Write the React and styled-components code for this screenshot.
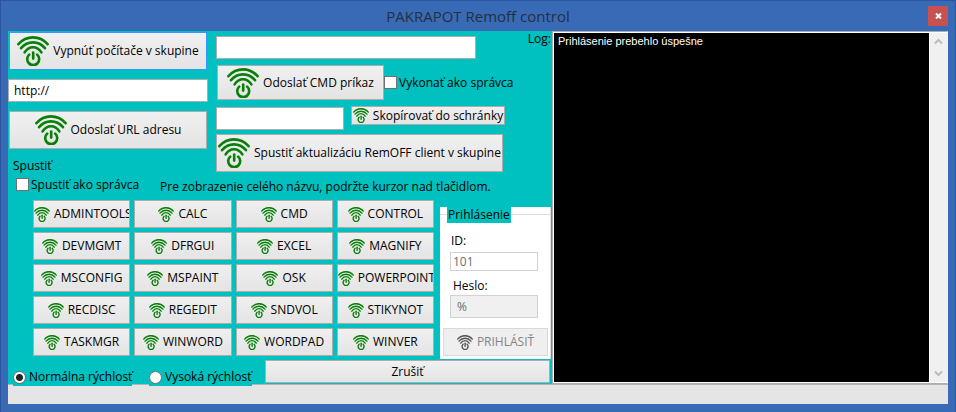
import React, { useState } from "react";
import styled, { createGlobalStyle } from "styled-components";

const programs = [
  "ADMINTOOLS", "CALC", "CMD", "CONTROL",
  "DEVMGMT", "DFRGUI", "EXCEL", "MAGNIFY",
  "MSCONFIG", "MSPAINT", "OSK", "POWERPOINT",
  "RECDISC", "REGEDIT", "SNDVOL", "STIKYNOT",
  "TASKMGR", "WINWORD", "WORDPAD", "WINVER",
];

function RemoteIcon({ small }) {
  return (
    <IconSvg $small={small} viewBox="0 0 32 30" aria-hidden="true">
      <path d="M1.4 8.2C9.5 -0.9 22.5 -0.9 30.6 8.2" />
      <path d="M4 12.2C10.7 4.4 21.3 4.4 28 12.2" />
      <path d="M7.6 16.4C12 9.6 20 9.6 24.4 16.4" />
      <path d="M12.2 18.6A6 6 0 1 0 20.2 18.6" />
      <path d="M16.2 16.6V22.6" />
    </IconSvg>
  );
}

function App() {
  const [speed, setSpeed] = useState("normal");

  return (
    <Window>
      <GlobalStyle />
      <TitleBar>
        <Title>PAKRAPOT Remoff control</Title>
        <CloseButton aria-label="Zavrieť">
          <svg width="7" height="6" viewBox="0 0 7 6">
            <path d="M1 0.5L6 5.5M6 0.5L1 5.5" stroke="#fff" strokeWidth="2" />
          </svg>
        </CloseButton>
      </TitleBar>

      <Client>
        <Controls>
          <TopArea>
            <UrlColumn>
              <BigButton $focused><RemoteIcon />Vypnúť počítače v skupine</BigButton>
              <TextBox aria-label="URL adresa" defaultValue="http://" />
              <BigButton><RemoteIcon />Odoslať URL adresu</BigButton>
              <Caption>Spustiť</Caption>
            </UrlColumn>
            <CommandColumn>
              <CommandBox aria-label="CMD príkaz" />
              <Row>
                <CommandButton><RemoteIcon />Odoslať CMD príkaz</CommandButton>
                <CheckLabel><CheckBox type="checkbox" />Vykonať ako správca</CheckLabel>
              </Row>
              <CopyRow>
                <CopyBox aria-label="Schránka" />
                <CopyButton><RemoteIcon small />Skopírovať do schránky</CopyButton>
              </CopyRow>
              <UpdateButton><RemoteIcon />Spustiť aktualizáciu RemOFF client v skupine</UpdateButton>
            </CommandColumn>
            <LogLabel htmlFor="log">Log:</LogLabel>
          </TopArea>

          <HintRow>
            <CheckLabel><CheckBox type="checkbox" />Spustiť ako správca</CheckLabel>
            <Hint>Pre zobrazenie celého názvu, podržte kurzor nad tlačidlom.</Hint>
          </HintRow>

          <MiddleArea>
            <ProgramGrid>
              {programs.map((name) => (
                <Button key={name} title={name}><RemoteIcon small />{name}</Button>
              ))}
            </ProgramGrid>
            <LoginPanel>
              <LoginHeader>
                <LoginTitle>Prihlásenie</LoginTitle>
              </LoginHeader>
              <LoginBody>
                <FieldLabel htmlFor="login-id">ID:</FieldLabel>
                <LoginBox id="login-id" defaultValue="101" disabled />
                <FieldLabel htmlFor="login-pass">Heslo:</FieldLabel>
                <PasswordBox id="login-pass" defaultValue="%" disabled />
              </LoginBody>
              <LoginButton disabled><RemoteIcon small />PRIHLÁSIŤ</LoginButton>
            </LoginPanel>
          </MiddleArea>

          <BottomRow>
            <RadioLabel $wide>
              <Radio type="radio" name="speed" checked={speed === "normal"} onChange={() => setSpeed("normal")} />
              Normálna rýchlosť
            </RadioLabel>
            <RadioLabel>
              <Radio type="radio" name="speed" checked={speed === "high"} onChange={() => setSpeed("high")} />
              Vysoká rýchlosť
            </RadioLabel>
            <CancelButton>Zrušiť</CancelButton>
          </BottomRow>
        </Controls>

        <LogFrame>
          <LogText id="log" readOnly defaultValue="Prihlásenie prebehlo úspešne" />
          <ScrollBar>
            <ScrollButton aria-label="Hore">
              <svg width="9" height="7" viewBox="0 0 9 7">
                <path d="M1 5.5L4.5 2L8 5.5" />
              </svg>
            </ScrollButton>
            <ScrollButton aria-label="Dole">
              <svg width="9" height="7" viewBox="0 0 9 7">
                <path d="M1 1.5L4.5 5L8 1.5" />
              </svg>
            </ScrollButton>
          </ScrollBar>
        </LogFrame>
      </Client>
      <StatusBar />
    </Window>
  );
}

export default App;

const GlobalStyle = createGlobalStyle`
  * {
    box-sizing: border-box;
  }

  body {
    margin: 0;
  }

  body, button, input, textarea {
    font-family: "Open Sans", "Noto Sans", sans-serif;
    font-size: 12px;
    line-height: 16px;
    color: #000;
  }
`;

const Window = styled.div`
  display: flex;
  flex-direction: column;
  min-height: 100vh;
  padding: 0 7px 8px;
  background: #386ab6;
  border: 1px solid #2c55a0;
  border-bottom: 0;
`;

const TitleBar = styled.header`
  display: flex;
  align-items: center;
  height: 30px;
`;

const Title = styled.h1`
  flex: 1;
  margin: 0;
  padding-left: 20px;
  text-align: center;
  font-size: 15px;
  line-height: 20px;
  font-weight: normal;
  color: #24303f;
`;

const CloseButton = styled.button`
  display: flex;
  align-items: center;
  justify-content: center;
  width: 20px;
  height: 20px;
  padding: 0;
  border: 0;
  background: #c75050;
`;

const Client = styled.main`
  display: flex;
  flex: 1;
  background: #00c0c0;
`;

const Controls = styled.div`
  display: flex;
  flex-direction: column;
  flex: 0 0 544px;
`;

const TopArea = styled.div`
  display: flex;
  height: 144px;
`;

const UrlColumn = styled.div`
  display: flex;
  flex-direction: column;
  gap: 9px;
  width: 200px;
  padding-top: 1px;
`;

const CommandColumn = styled.div`
  display: flex;
  flex-direction: column;
  align-items: flex-start;
  width: 300px;
  padding: 5px 0 0 8px;
`;

const Row = styled.div`
  display: flex;
  align-items: center;
  padding: 6px 0;
`;

const CopyRow = styled.div`
  display: flex;
  align-items: flex-start;
  gap: 7px;
  padding-bottom: 4px;
`;

const IconSvg = styled.svg`
  flex: none;
  width: ${(p) => (p.$small ? "16px" : "32px")};
  height: ${(p) => (p.$small ? "15px" : "30px")};
  fill: none;
  stroke: #078007;
  stroke-width: ${(p) => (p.$small ? 2.8 : 2.6)};
  stroke-linecap: round;

  button:disabled & {
    stroke: #555;
  }
`;

const Button = styled.button`
  display: flex;
  align-items: center;
  justify-content: safe center;
  gap: 4px;
  height: 28px;
  padding: 0;
  overflow: hidden;
  white-space: nowrap;
  border: 1px solid #acacac;
  background: linear-gradient(#f0f0f0, #e4e4e4);

  &:disabled {
    color: #838383;
    border-color: #d9d9d9;
    background: #efefef;
  }
`;

const BigButton = styled(Button)`
  height: 38px;
  margin: 0 1px;
  border-color: ${(p) => (p.$focused ? "#3399ff" : "#acacac")};
`;

const CommandButton = styled(Button)`
  width: 167px;
  height: 35px;
  margin-left: 1px;
`;

const CopyButton = styled(Button)`
  width: 154px;
  height: 19px;
`;

const UpdateButton = styled(Button)`
  height: 38px;
  padding: 0 1px;
`;

const CancelButton = styled(Button)`
  flex: 1;
  height: 23px;
  margin: 0 2px 0 13px;
`;

const TextBox = styled.input`
  height: 23px;
  padding: 0 5px;
  border: 1px solid #abadb3;
  border-radius: 0;
  background: #fff;
`;

const CommandBox = styled(TextBox)`
  width: 260px;
`;

const CopyBox = styled(TextBox)`
  width: 128px;
  margin-top: 1px;
`;

const Caption = styled.span`
  padding-left: 5px;
`;

const CheckLabel = styled.label`
  display: flex;
  align-items: center;
  gap: 2px;
  white-space: nowrap;
`;

const CheckBox = styled.input`
  appearance: none;
  width: 13px;
  height: 13px;
  margin: 0;
  border: 1px solid #707070;
  background: #fff;

  &:checked {
    box-shadow: inset 0 0 0 2px #fff;
    background: #222;
  }
`;

const LogLabel = styled.label`
  margin-left: auto;
  padding-right: 1px;
`;

const HintRow = styled.div`
  display: flex;
  align-items: center;
  gap: 21px;
  height: 25px;
  padding: 0 0 6px 8px;
`;

const Hint = styled.p`
  margin: 0;
  padding-top: 4px;
  white-space: nowrap;
`;

const MiddleArea = styled.div`
  display: flex;
  align-items: flex-end;
  gap: 6px;
  padding: 0 1px 0 25px;
`;

const ProgramGrid = styled.div`
  display: grid;
  flex: 1;
  grid-template-columns: repeat(4, minmax(0, 1fr));
  gap: 4px;
  padding-bottom: 3px;
`;

const LoginPanel = styled.section`
  width: 111px;
  height: 152px;
  border-right: 1px solid #dcdcdc;
  background: #fff;
`;

const LoginHeader = styled.div`
  padding: 0 7px;
  background: linear-gradient(#dcdcdc, #dcdcdc) 0 7px / 100% 1px no-repeat;
`;

const LoginTitle = styled.h2`
  width: 64px;
  margin: 0;
  padding: 0 1px;
  font-size: 12px;
  line-height: 16px;
  font-weight: normal;
  white-space: nowrap;
  background: #00c0c0;
`;

const LoginBody = styled.div`
  display: flex;
  flex-direction: column;
  padding: 10px 12px 10px 10px;
`;

const FieldLabel = styled.label`
  padding: 0 1px 3px;

  input + & {
    padding: 7px 3px 1px;
  }
`;

const LoginBox = styled(TextBox)`
  width: 100%;
  height: 19px;
  padding: 0 2px;
  color: #6d6d6d;
  border-color: #d2d2d2;
`;

const PasswordBox = styled(LoginBox)`
  height: 23px;
  padding: 0 6px;
  background: #f0f0f0;
`;

const LoginButton = styled(Button)`
  width: 105px;
  margin: 0 3px;
`;

const BottomRow = styled.div`
  display: flex;
  align-items: flex-start;
  height: 25px;
  padding: 1px 0 0 5px;
`;

/* the speed labels reach over the edge of the status bar */
const RadioLabel = styled.label`
  position: relative;
  z-index: 1;
  display: flex;
  align-items: center;
  gap: 3px;
  width: ${(p) => (p.$wide ? "119px" : "103px")};
  height: 18px;
  margin: 8px ${(p) => (p.$wide ? "17px" : "0")} 0 0;
  white-space: nowrap;
  background: #00c0c0;
`;

const Radio = styled.input`
  appearance: none;
  flex: none;
  width: 13px;
  height: 13px;
  margin: 0;
  border: 1px solid #707070;
  border-radius: 50%;
  background: #fff;

  &:checked {
    background: radial-gradient(circle, #222 3px, #fff 4px);
  }
`;

const LogFrame = styled.div`
  display: flex;
  flex: 1;
  border: 1px solid #abadb3;
  border-right-color: #f0f0f0;
  padding: 1px 0 1px 1px;
  background: #fff;
`;

const LogText = styled.textarea`
  flex: 1;
  min-width: 0;
  padding: 0 4px;
  border: 0;
  outline: 0;
  resize: none;
  font-family: "Liberation Sans", Arial, sans-serif;
  color: #fff;
  background: #000;
  font-size: 11px;
`;

const ScrollBar = styled.div`
  display: flex;
  flex-direction: column;
  justify-content: space-between;
  width: 17px;
  margin-left: 1px;
  background: #f0f0f0;
`;

const ScrollButton = styled.button`
  display: flex;
  align-items: center;
  justify-content: center;
  height: 17px;
  padding: 0;
  border: 0;
  background: none;

  path {
    fill: none;
    stroke: #bcbcbc;
    stroke-width: 2;
  }
`;

const StatusBar = styled.footer`
  height: 20px;
  border-top: 1px solid #b4b4b4;
  background: #e5e5e5;
`;
